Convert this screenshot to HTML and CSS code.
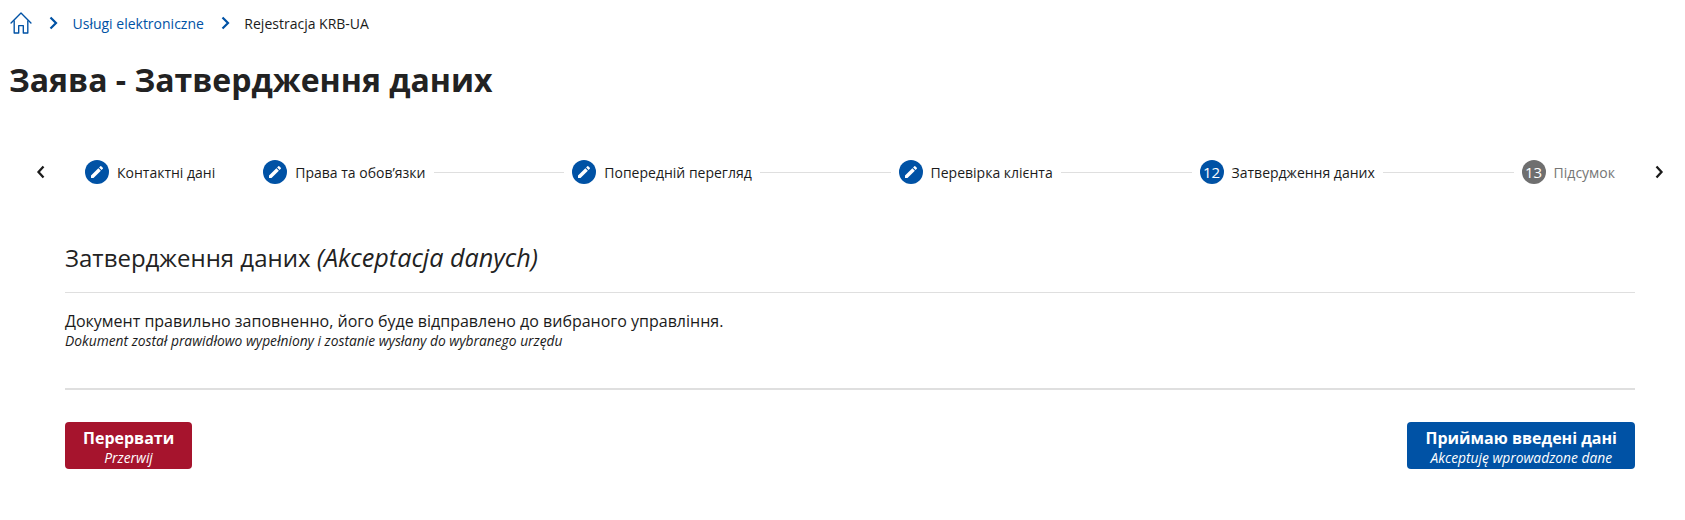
FILE: index.html
```html
<!DOCTYPE html>
<html lang="uk">
<head>
    <meta charset="UTF-8">
    <meta name="viewport" content="width=device-width, initial-scale=1.0">
    <title>Заява - Затвердження даних</title>
    <link rel="stylesheet" href="styles.css">
</head>
<body>
    <nav class="breadcrumb">
        <a class="home" href="#">
            <svg width="22" height="22" viewBox="0.5 0.5 21 21" fill="none" stroke="#0052a5" stroke-width="1.3" stroke-linejoin="round" stroke-linecap="round">
                <path d="M1.5 11 L11 1.5 L20.5 11"/>
                <path d="M4.5 9 V20.5 H8.8 V13.5 H13.2 V20.5 H17.5 V9"/>
            </svg>
        </a>
        <svg class="chevron" width="10" height="14" viewBox="0 0 10 14"><path d="M1.5 1.5 L7 7 L1.5 12.5" fill="none" stroke="#0052a5" stroke-width="2.2"/></svg>
        <a href="#">Usługi elektroniczne</a>
        <svg class="chevron" width="10" height="14" viewBox="0 0 10 14"><path d="M1.5 1.5 L7 7 L1.5 12.5" fill="none" stroke="#0052a5" stroke-width="2.2"/></svg>
        <span>Rejestracja KRB-UA</span>
    </nav>

    <h1>Заява - Затвердження даних</h1>

    <div class="stepper">
        <svg class="arrow" width="10" height="14" viewBox="0 0 10 14"><path d="M7.5 1.5 L2.5 7 L7.5 12.5" fill="none" stroke="#1b1b1b" stroke-width="2.3"/></svg>
        <div class="steps">
            <div class="step first">
                <span class="circle"><svg width="16" height="16" viewBox="0 0 24 24" fill="#fff"><path d="M3 17.25V21h3.75L17.81 9.94l-3.75-3.75L3 17.25zM20.71 7.04a1 1 0 0 0 0-1.41l-2.34-2.34a1 1 0 0 0-1.41 0l-1.83 1.83 3.75 3.75 1.83-1.83z"/></svg></span>
                <span>Контактні дані</span>
            </div>
            <div class="step">
                <span class="circle"><svg width="16" height="16" viewBox="0 0 24 24" fill="#fff"><path d="M3 17.25V21h3.75L17.81 9.94l-3.75-3.75L3 17.25zM20.71 7.04a1 1 0 0 0 0-1.41l-2.34-2.34a1 1 0 0 0-1.41 0l-1.83 1.83 3.75 3.75 1.83-1.83z"/></svg></span>
                <span>Права та обов’язки</span>
            </div>
            <i class="line"></i>
            <div class="step">
                <span class="circle"><svg width="16" height="16" viewBox="0 0 24 24" fill="#fff"><path d="M3 17.25V21h3.75L17.81 9.94l-3.75-3.75L3 17.25zM20.71 7.04a1 1 0 0 0 0-1.41l-2.34-2.34a1 1 0 0 0-1.41 0l-1.83 1.83 3.75 3.75 1.83-1.83z"/></svg></span>
                <span>Попередній перегляд</span>
            </div>
            <i class="line"></i>
            <div class="step">
                <span class="circle"><svg width="16" height="16" viewBox="0 0 24 24" fill="#fff"><path d="M3 17.25V21h3.75L17.81 9.94l-3.75-3.75L3 17.25zM20.71 7.04a1 1 0 0 0 0-1.41l-2.34-2.34a1 1 0 0 0-1.41 0l-1.83 1.83 3.75 3.75 1.83-1.83z"/></svg></span>
                <span>Перевірка клієнта</span>
            </div>
            <i class="line"></i>
            <div class="step">
                <span class="circle">12</span>
                <span>Затвердження даних</span>
            </div>
            <i class="line"></i>
            <div class="step disabled">
                <span class="circle">13</span>
                <span>Підсумок</span>
            </div>
        </div>
        <svg class="arrow" width="10" height="14" viewBox="0 0 10 14"><path d="M2.5 1.5 L7.5 7 L2.5 12.5" fill="none" stroke="#1b1b1b" stroke-width="2.3"/></svg>
    </div>

    <main class="content">
        <h2>Затвердження даних <em>(Akceptacja danych)</em></h2>
        <div class="message">
            <p>Документ правильно заповненно, його буде відправлено до вибраного управління.</p>
            <small>Dokument został prawidłowo wypełniony i zostanie wysłany do wybranego urzędu</small>
        </div>
        <div class="actions">
            <button type="button" class="btn btn-red">Перервати<em>Przerwij</em></button>
            <button type="button" class="btn btn-blue">Приймаю введені дані<em>Akceptuję wprowadzone dane</em></button>
        </div>
    </main>
</body>
</html>
```

FILE: styles.css
```css
* {
    box-sizing: border-box;
    margin: 0;
    padding: 0;
}
body {
    font-family: "Open Sans", sans-serif;
    color: #1b1b1b;
    background: #fff;
    font-size: 16px;
}
a {
    color: #0052a5;
    text-decoration: none;
}
.breadcrumb {
    display: flex;
    align-items: center;
    height: 24px;
    margin: 11px 0 0 10px;
    font-size: 14px;
}
.home {
    display: flex;
}
.chevron {
    margin: 0 13.5px 0 17px;
}
h1 {
    font-size: 32px;
    font-weight: 700;
    line-height: 44px;
    margin: 23px 0 0 9px;
    color: #222;
}
.stepper {
    display: flex;
    align-items: center;
    justify-content: space-between;
    height: 26px;
    margin: 57px 21px 0 36px;
}
.steps {
    flex: 1;
    display: flex;
    align-items: center;
    margin: 0 39px 0 39px;
    font-size: 14px;
}
.step {
    display: flex;
    align-items: center;
    gap: 8px;
    white-space: nowrap;
}
.step.first {
    margin-right: 48px;
}
.circle {
    display: flex;
    align-items: center;
    justify-content: center;
    width: 24px;
    height: 24px;
    border-radius: 50%;
    background: #0052a5;
    color: #fff;
    font-size: 15px;
}
.disabled {
    color: #767676;
}
.disabled .circle {
    background: #6f6f6f;
}
.line {
    flex: 1;
    height: 1px;
    margin: 0 8px;
    background: #dfdfdf;
}
.content {
    margin: 56px 50px 0 65px;
}
h2 {
    font-size: 24px;
    font-weight: 400;
    line-height: 33px;
    padding-bottom: 18px;
    border-bottom: 1px solid #dfdfdf;
    color: #222;
}
h2 em {
    font-size: 25.2px;
}
.message {
    padding: 17px 0 39px;
    border-bottom: 2px solid #dfdfdf;
}
.message p {
    line-height: 23px;
}
.message small {
    display: block;
    font-size: 13.8px;
    font-style: italic;
    line-height: 16px;
}
.actions {
    display: flex;
    justify-content: space-between;
    margin-top: 32px;
}
.btn {
    display: flex;
    flex-direction: column;
    align-items: center;
    height: 47px;
    padding: 5px 18px 0;
    border: none;
    border-radius: 4px;
    color: #fff;
    font-family: inherit;
    font-size: 16px;
    font-weight: 700;
    line-height: 22px;
}
.btn em {
    font-size: 13.8px;
    font-weight: 400;
    line-height: 18px;
}
.btn-red {
    background: #a6142d;
}
.btn-blue {
    background: #0052a5;
}
```
